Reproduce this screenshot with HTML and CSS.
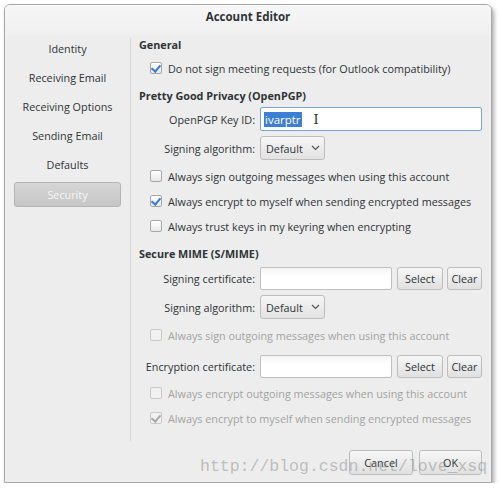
FILE: index.html
```html
<!DOCTYPE html>
<html>
<head>
<meta charset="utf-8">
<link rel="stylesheet" href="styles.css">
</head>
<body>
<div class="window">
  <div class="titlebar">Account Editor</div>
  <div class="main">
    <nav class="sidebar">
      <div class="nav-item first">Identity</div>
      <div class="nav-item">Receiving Email</div>
      <div class="nav-item">Receiving Options</div>
      <div class="nav-item">Sending Email</div>
      <div class="nav-item">Defaults</div>
      <div class="nav-item selected">Security</div>
    </nav>
    <div class="content">
      <div class="section-title t-general">General</div>
      <label class="check r-1"><span class="box checked"></span>Do not sign meeting requests (for Outlook compatibility)</label>

      <div class="section-title t-pgp">Pretty Good Privacy (OpenPGP)</div>
      <div class="form-row r-key">
        <span class="label">OpenPGP Key ID:</span>
        <div class="entry focus wide"><span class="sel">ivarptr</span><span class="ibeam">I</span></div>
      </div>
      <div class="form-row r-gap5">
        <span class="label">Signing algorithm:</span>
        <div class="combo">Default<svg class="chev" width="9" height="6" viewBox="0 0 9 6"><path d="M1 1l3.5 3.5L8 1" fill="none" stroke="#555" stroke-width="1.2"/></svg></div>
      </div>
      <label class="check r-7"><span class="box"></span>Always sign outgoing messages when using this account</label>
      <label class="check r-7"><span class="box checked"></span>Always encrypt to myself when sending encrypted messages</label>
      <label class="check r-7"><span class="box"></span>Always trust keys in my keyring when encrypting</label>

      <div class="section-title t-smime">Secure MIME (S/MIME)</div>
      <div class="form-row r-cert">
        <span class="label">Signing certificate:</span>
        <div class="entry narrow"></div>
        <div class="btn b-select">Select</div>
        <div class="btn b-clear">Clear</div>
      </div>
      <div class="form-row r-gap5">
        <span class="label">Signing algorithm:</span>
        <div class="combo">Default<svg class="chev" width="9" height="6" viewBox="0 0 9 6"><path d="M1 1l3.5 3.5L8 1" fill="none" stroke="#555" stroke-width="1.2"/></svg></div>
      </div>
      <label class="check disabled r-7"><span class="box"></span>Always sign outgoing messages when using this account</label>
      <div class="form-row r-enc">
        <span class="label">Encryption certificate:</span>
        <div class="entry narrow"></div>
        <div class="btn b-select">Select</div>
        <div class="btn b-clear">Clear</div>
      </div>
      <label class="check disabled r-6"><span class="box"></span>Always encrypt outgoing messages when using this account</label>
      <label class="check disabled r-7"><span class="box checked"></span>Always encrypt to myself when sending encrypted messages</label>
    </div>
  </div>
  <div class="actions">
    <div class="btn b-cancel">Cancel</div>
    <div class="btn b-ok">OK</div>
  </div>
  <div class="watermark">http://blog.csdn.net/love_xsq</div>
</div>
</body>
</html>
```
FILE: styles.css
```css
html, body {
  margin: 0;
  padding: 0;
  background: #ffffff;
}
body {
  font-family: "Open Sans", "Noto Sans", sans-serif;
  font-size: 10.8px;
  color: #2e3436;
}
.window {
  position: relative;
  margin: 4px 0 0 4px;
  width: 486px;
  height: 477px;
  border: 1px solid #a9a9a9;
  border-radius: 6px 6px 0 0;
  background: #ededed;
  box-shadow: 2px 3px 4px rgba(0, 0, 0, 0.35);
  display: flex;
  flex-direction: column;
  overflow: hidden;
}
.titlebar {
  height: 30px;
  line-height: 24px;
  text-align: center;
  font-weight: bold;
  font-size: 11.5px;
  color: #2e3436;
  background: linear-gradient(#f7f7f7, #efefef);
  flex: none;
}
.main {
  display: flex;
  flex: none;
  height: 406px;
}
.sidebar {
  width: 125px;
  flex: none;
  border-right: 1px solid #d6d6d6;
  margin-top: 3px;
  display: flex;
  flex-direction: column;
  align-items: center;
}
.nav-item {
  height: 29px;
  line-height: 29px;
  text-align: center;
  color: #2e3436;
}
.nav-item.first { margin-top: -4px; }
.nav-item.selected {
  margin-top: 3px;
  width: 105px;
  height: 23px;
  line-height: 23px;
  border: 1px solid #b4b4b4;
  border-radius: 3px;
  background: linear-gradient(#d6d6d6, #c6c6c6);
  color: #f6f6f6;
}
.content {
  flex: 1;
  padding: 1px 9px 0 8px;
  display: flex;
  flex-direction: column;
}
.section-title {
  height: 18px;
  line-height: 18px;
  font-weight: bold;
}
.t-pgp { margin-top: 10px; }
.t-smime { margin-top: 10px; }
.check {
  display: flex;
  align-items: center;
  height: 18px;
  padding-left: 11px;
  gap: 6px;
}
.r-1 { margin-top: 5px; }
.r-6 { margin-top: 6px; }
.r-7 { margin-top: 7px; }
.box {
  position: relative;
  width: 10px;
  height: 10px;
  border: 1px solid #a8a8a8;
  border-radius: 2px;
  background: linear-gradient(#ffffff, #e8e8e8);
  flex: none;
}
.box.checked::after {
  content: "";
  position: absolute;
  left: 2px;
  top: 0px;
  width: 4px;
  height: 7px;
  border: solid #3b7dd8;
  border-width: 0 2px 2px 0;
  transform: rotate(40deg);
}
.check.disabled { color: #a3a3a3; }
.check.disabled .box { border-color: #c9c9c9; background: #f1f1f1; }
.check.disabled .box.checked::after { border-color: #a9a9a9; }
.form-row {
  display: flex;
  align-items: center;
  height: 24px;
}
.r-key { margin-top: 2px; }
.r-gap5 { margin-top: 5px; }
.r-cert { margin-top: 3px; }
.r-enc { margin-top: 10px; }
.label {
  width: 116px;
  text-align: right;
  margin-right: 5px;
  flex: none;
}
.entry {
  border: 1px solid #c0c0c0;
  border-radius: 2px;
  background: linear-gradient(#f4f4f4, #ffffff 40%);
  box-sizing: border-box;
  height: 24px;
  display: flex;
  align-items: center;
  padding-left: 3px;
}
.entry.wide { width: 222px; }
.entry.narrow { width: 132px; height: 23px; }
.entry.focus { border-color: #7aa3d6; background: #ffffff; }
.sel {
  background: #3d7fd3;
  color: #ffffff;
  line-height: 15px;
  padding: 0 1px;
  font-size: 11.5px;
}
.ibeam {
  margin-left: 12px;
  font-family: "DejaVu Serif", serif;
  font-size: 13px;
  color: #333;
}
.combo {
  width: 65px;
  height: 24px;
  box-sizing: border-box;
  border: 1px solid #bdbdbd;
  border-radius: 3px;
  background: linear-gradient(#f6f6f6, #e2e2e2);
  display: flex;
  align-items: center;
  padding-left: 5px;
  gap: 8px;
}
.chev { flex: none; }
.btn {
  height: 23px;
  box-sizing: border-box;
  border: 1px solid #bdbdbd;
  border-radius: 3px;
  background: linear-gradient(#f7f7f7, #e0e0e0);
  display: flex;
  align-items: center;
  justify-content: center;
  flex: none;
}
.b-select { width: 46px; margin-left: 5px; }
.b-clear { width: 35px; margin-left: 4px; }
.actions {
  display: flex;
  justify-content: flex-end;
  gap: 6px;
  padding: 9px 9px 0 0;
}
.b-cancel { width: 64px; height: 25px; }
.b-ok { width: 63px; height: 25px; }
.watermark {
  position: absolute;
  left: 195px;
  top: 452px;
  font-family: "Liberation Mono", monospace;
  font-size: 16.5px;
  color: rgba(140, 140, 140, 0.5);
  white-space: nowrap;
}
```
